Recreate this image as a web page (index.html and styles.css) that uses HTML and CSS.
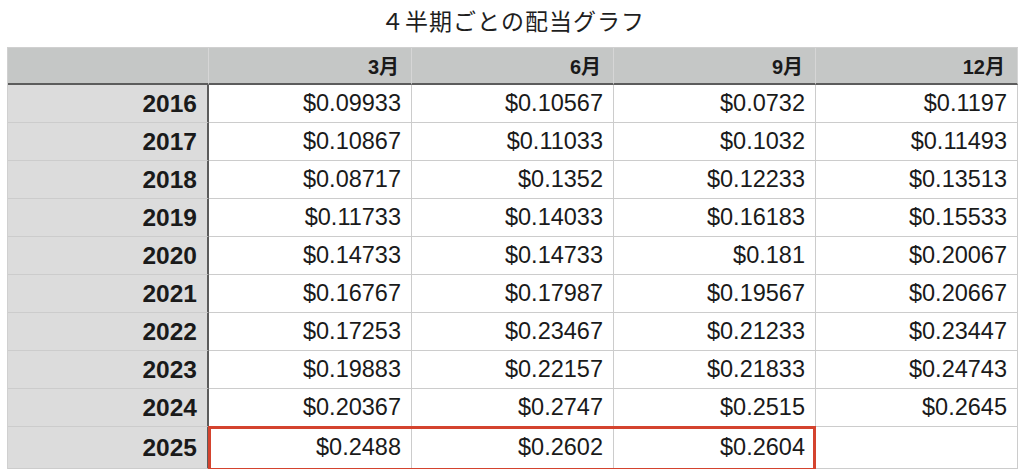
FILE: index.html
```html
<!DOCTYPE html>
<html lang="ja">
<head>
<meta charset="utf-8">
<title>４半期ごとの配当グラフ</title>
<link rel="stylesheet" href="styles.css">
</head>
<body>
<h1 class="title">４半期ごとの配当グラフ</h1>
<div class="sheet">
  <div class="cell head corner"></div>
  <div class="cell head">3月</div>
  <div class="cell head">6月</div>
  <div class="cell head">9月</div>
  <div class="cell head last">12月</div>

  <div class="cell year">2016</div><div class="cell">$0.09933</div><div class="cell">$0.10567</div><div class="cell">$0.0732</div><div class="cell last">$0.1197</div>
  <div class="cell year">2017</div><div class="cell">$0.10867</div><div class="cell">$0.11033</div><div class="cell">$0.1032</div><div class="cell last">$0.11493</div>
  <div class="cell year">2018</div><div class="cell">$0.08717</div><div class="cell">$0.1352</div><div class="cell">$0.12233</div><div class="cell last">$0.13513</div>
  <div class="cell year">2019</div><div class="cell">$0.11733</div><div class="cell">$0.14033</div><div class="cell">$0.16183</div><div class="cell last">$0.15533</div>
  <div class="cell year">2020</div><div class="cell">$0.14733</div><div class="cell">$0.14733</div><div class="cell">$0.181</div><div class="cell last">$0.20067</div>
  <div class="cell year">2021</div><div class="cell">$0.16767</div><div class="cell">$0.17987</div><div class="cell">$0.19567</div><div class="cell last">$0.20667</div>
  <div class="cell year">2022</div><div class="cell">$0.17253</div><div class="cell">$0.23467</div><div class="cell">$0.21233</div><div class="cell last">$0.23447</div>
  <div class="cell year">2023</div><div class="cell">$0.19883</div><div class="cell">$0.22157</div><div class="cell">$0.21833</div><div class="cell last">$0.24743</div>
  <div class="cell year">2024</div><div class="cell">$0.20367</div><div class="cell">$0.2747</div><div class="cell">$0.2515</div><div class="cell last">$0.2645</div>
  <div class="cell year">2025</div><div class="cell">$0.2488</div><div class="cell">$0.2602</div><div class="cell">$0.2604</div><div class="cell last"></div>

  <div class="highlight"></div>
</div>
</body>
</html>
```
FILE: styles.css
```css
html, body {
  margin: 0;
  padding: 0;
  background: #ffffff;
}
body {
  font-family: "Liberation Sans", "Noto Sans CJK JP", sans-serif;
  color: #1a1a1a;
}
.title {
  margin: 0;
  height: 40px;
  line-height: 40px;
  text-align: center;
  font-family: "Noto Sans CJK JP", sans-serif;
  font-weight: 400;
  font-size: 23px;
  color: #1e1e1e;
  letter-spacing: 1px;
  padding-left: 2px;
}
.sheet {
  margin: 7px 0 0 7px;
  width: 1010px;
  display: grid;
  grid-template-columns: 201px 203px 202px 202px 202px;
  grid-template-rows: 37px repeat(9, 38px) 42px;
  border-top: 1px solid #d0d0d0;
  border-left: 1px solid #d0d0d0;
  position: relative;
}
.cell {
  display: flex;
  align-items: center;
  justify-content: flex-end;
  padding-right: 10px;
  font-size: 23.5px;
  border-right: 1px solid #cccccc;
  border-bottom: 1px solid #cccccc;
  background: #ffffff;
  box-sizing: border-box;
}
.head {
  background: #c5c7c6;
  font-weight: 700;
  font-size: 20px;
  padding-right: 12px;
  border-bottom: 2px solid #5c5c5c;
  border-right-color: #d6d6d6;
}
.year {
  background: #dcdcdc;
  font-weight: 700;
  font-size: 24.5px;
  border-right: 2px solid #5c5c5c;
}
.corner {
  border-right: 1px solid #d6d6d6;
}
.highlight {
  position: absolute;
  grid-row: 11;
  grid-column: 2 / 5;
  top: -1px;
  left: -1px;
  right: 0;
  bottom: -2px;
  border: 3px solid #d4432e;
  pointer-events: none;
}
```
